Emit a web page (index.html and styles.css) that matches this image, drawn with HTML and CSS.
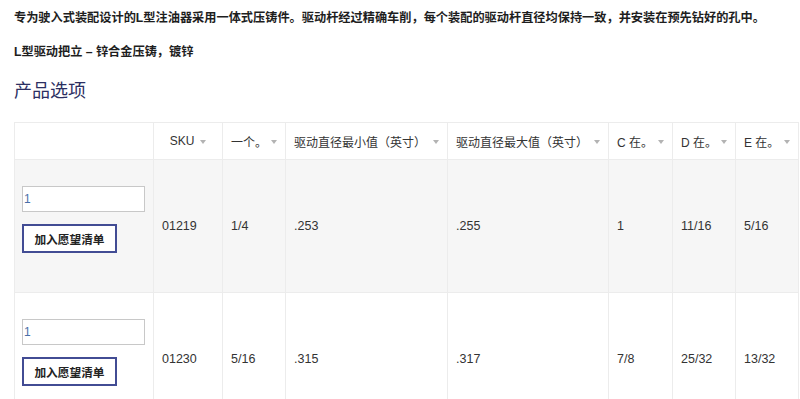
FILE: index.html
```html
<!DOCTYPE html>
<html lang="zh-CN">
<head>
    <meta charset="UTF-8">
    <title>L型注油器</title>
    <meta name="viewport" content="width=device-width, initial-scale=1.0">
    <link rel="stylesheet" href="styles.css">
</head>
<body>

    <!-- Product description -->
    <main class="product">
        <p class="intro">专为驶入式装配设计的L型注油器采用一体式压铸件。驱动杆经过精确车削，每个装配的驱动杆直径均保持一致，并安装在预先钻好的孔中。</p>
        <p class="intro second">L型驱动把立 – 锌合金压铸，镀锌</p>

        <h2 class="section-title">产品选项</h2>

        <!-- Options table -->
        <table class="options">
            <colgroup>
                <col style="width: 139px">
                <col style="width: 69px">
                <col style="width: 63px">
                <col style="width: 162px">
                <col style="width: 161px">
                <col style="width: 64px">
                <col style="width: 63px">
                <col style="width: 63px">
            </colgroup>
            <thead>
                <tr>
                    <th></th>
                    <th class="center"><span class="th-inner">SKU<i class="caret"></i></span></th>
                    <th><span class="th-inner">一个。<i class="caret"></i></span></th>
                    <th><span class="th-inner">驱动直径最小值（英寸）<i class="caret"></i></span></th>
                    <th><span class="th-inner">驱动直径最大值（英寸）<i class="caret"></i></span></th>
                    <th><span class="th-inner">C 在。<i class="caret"></i></span></th>
                    <th><span class="th-inner">D 在。<i class="caret"></i></span></th>
                    <th><span class="th-inner">E 在。<i class="caret"></i></span></th>
                </tr>
            </thead>
            <tbody>
                <tr class="shade">
                    <td class="buy">
                        <input type="text" value="1" class="qty">
                        <button type="button" class="wish">加入愿望清单</button>
                    </td>
                    <td>01219</td>
                    <td>1/4</td>
                    <td>.253</td>
                    <td>.255</td>
                    <td>1</td>
                    <td>11/16</td>
                    <td>5/16</td>
                </tr>
                <tr>
                    <td class="buy">
                        <input type="text" value="1" class="qty">
                        <button type="button" class="wish">加入愿望清单</button>
                    </td>
                    <td>01230</td>
                    <td>5/16</td>
                    <td>.315</td>
                    <td>.317</td>
                    <td>7/8</td>
                    <td>25/32</td>
                    <td>13/32</td>
                </tr>
            </tbody>
        </table>
    </main>

</body>
</html>
```

FILE: styles.css
```css
body {
    margin: 0;
    padding: 0;
    font-family: "Liberation Sans", "Noto Sans CJK SC", Arial, sans-serif;
    color: #222;
    background: #fff;
    overflow: hidden;
}
.product {
    padding: 8px 0 0 14px;
}
.intro {
    margin: 0;
    font-size: 12.2px;
    line-height: 20px;
    font-weight: bold;
    color: #1e1e1e;
}
.intro.second {
    margin-top: 14px;
}
.section-title {
    margin: 16px 0 18px;
    font-size: 18px;
    line-height: 26px;
    font-weight: normal;
    color: #2c2f62;
}
.options {
    width: 784px;
    table-layout: fixed;
    border-collapse: collapse;
    font-size: 12.5px;
    color: #333;
}
.options th,
.options td {
    border: 1px solid #ececec;
    padding: 0 8px;
    text-align: left;
}
.options th {
    height: 36px;
    font-size: 12px;
    font-weight: normal;
    color: #333;
    white-space: nowrap;
}
.th-inner {
    display: flex;
    align-items: center;
    justify-content: space-between;
}
.options th.center .th-inner {
    justify-content: center;
    gap: 6px;
}
.caret {
    display: inline-block;
    width: 0;
    height: 0;
    border-left: 3px solid transparent;
    border-right: 3px solid transparent;
    border-top: 4px solid #b3b3b3;
    margin-top: 1px;
}
.shade td {
    background: #f6f6f6;
}
.options td {
    vertical-align: middle;
}
.options td.buy {
    vertical-align: top;
    padding: 26px 8px 39px 7px;
}
.qty {
    display: block;
    box-sizing: border-box;
    width: 123px;
    height: 26px;
    margin: 0 0 12px;
    padding: 0 1px;
    border: 1px solid #c8c8c8;
    background: #fff;
    font-family: "Liberation Sans", Arial, sans-serif;
    font-size: 12px;
    color: #4a6fa8;
}
.wish {
    display: block;
    box-sizing: border-box;
    width: 95px;
    height: 29px;
    padding: 0;
    border: 2px solid #424c94;
    background: #fff;
    font-family: "Noto Sans CJK SC", sans-serif;
    font-size: 11.7px;
    font-weight: bold;
    color: #222;
    cursor: pointer;
}
```
